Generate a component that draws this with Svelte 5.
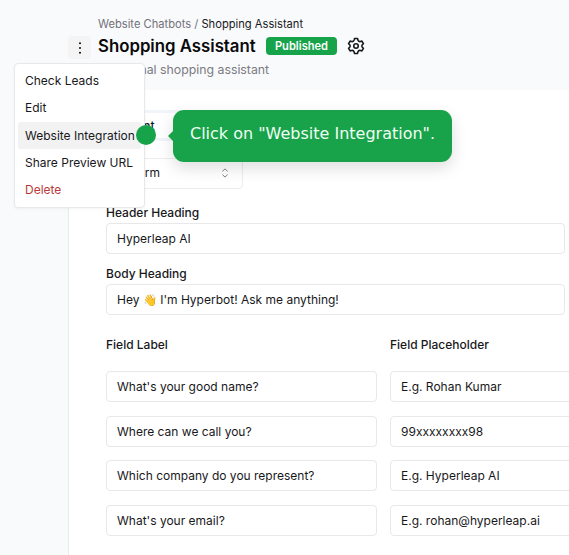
<script>
  const menu = ['Check Leads', 'Edit', 'Website Integration', 'Share Preview URL', 'Delete'];
  const rows = [
    ["What's your good name?", 'E.g. Rohan Kumar'],
    ['Where can we call you?', '99xxxxxxxx98'],
    ['Which company do you represent?', 'E.g. Hyperleap AI'],
    ["What's your email?", 'E.g. rohan@hyperleap.ai']
  ];
</script>

<div class="page">
  <header>
    <button class="more" aria-label="More options">
      <svg width="16" height="16" viewBox="0 0 16 16"><g fill="#18181b"><circle cx="8" cy="3.3" r="1.05"/><circle cx="8" cy="8" r="1.05"/><circle cx="8" cy="12.7" r="1.05"/></g></svg>
    </button>
    <div class="heading">
      <nav>Website Chatbots / <span>Shopping Assistant</span></nav>
      <div class="title">
        <h1>Shopping Assistant</h1>
        <span class="badge">Published</span>
        <svg class="gear" width="18" height="18" viewBox="0 0 24 24" fill="none" stroke="#18181b" stroke-width="2.1" stroke-linecap="round" stroke-linejoin="round"><path d="M9.6 3.9 10 2h4l.5 2.1a3 3 0 0 0 3.4 2l2-.6 2 3.4-1.5 1.5a2.3 2.3 0 0 0 0 3.2l1.5 1.5-2 3.4-2-.6a3 3 0 0 0-3.4 2L14 22h-4l-.5-2.1a3 3 0 0 0-3.4-2l-2 .6-2-3.4 1.5-1.5a2.3 2.3 0 0 0 0-3.2L2.1 8.9l2-3.4 2 .6a3 3 0 0 0 3.5-2.2z"/><circle cx="12" cy="12" r="3"/></svg>
      </div>
      <p>Personal shopping assistant</p>
    </div>
  </header>

  <main>
    <div class="tabs"><span>Content</span></div>
    <div class="select">
      <span>Form</span>
      <svg width="14" height="14" viewBox="0 0 14 14" fill="none" stroke="#808086" stroke-width="1" stroke-linecap="round" stroke-linejoin="round"><path d="M4.7 5.1 7 2.9l2.3 2.2M4.7 8.9 7 11.1l2.3-2.2"/></svg>
    </div>
    <div class="label">Header Heading</div>
    <div class="input wide">Hyperleap AI</div>
    <div class="label second">Body Heading</div>
    <div class="input wide">Hey <span class="wave">👋</span> I'm Hyperbot! Ask me anything!</div>
    <div class="grid">
      <div class="label">Field Label</div>
      <div class="label">Field Placeholder</div>
      {#each rows as [name, hint]}
        <div class="input">{name}</div>
        <div class="input">{hint}</div>
      {/each}
    </div>
  </main>

  <div class="menu">
    {#each menu as item, i}
      <div class="item" class:active={i === 2} class:danger={i === 4}>{item}</div>
    {/each}
  </div>
  <div class="dot"></div>
  <div class="tip">Click on "Website Integration".</div>
</div>

<style>
  .page {
    position: relative;
    width: 569px;
    height: 555px;
    overflow: hidden;
    background: #f9fafb;
    color: #18181b;
    font: 12px/18px Inter, sans-serif;
    box-sizing: border-box;
  }
  .page * { box-sizing: border-box; }
  header { display: flex; height: 90px; padding: 15px 0 0 68px; }
  .more {
    width: 23px; height: 23px; margin-top: 21px; padding: 0; border: 0;
    border-radius: 4px; background: #f4f4f5;
    display: grid; place-items: center;
  }
  .heading { margin-left: 7px; white-space: nowrap; }
  nav { font-size: 11.16px; line-height: 18px; color: #71717a; }
  nav span { color: #18181b; }
  .title { display: flex; align-items: center; height: 26px; }
  h1 { margin: 0; width: 158px; font-size: 16.8px; line-height: 26px; font-weight: 600; color: #09090b; }
  .badge {
    width: 71px; height: 18px; margin-left: 10px; border-radius: 4px; text-align: center;
    background: #16a34a; color: #fff; font-size: 11.1px; line-height: 18px; font-weight: 600;
  }
  .gear { margin-left: 10px; }
  p { margin: 2px 0 0; padding-left: 8px; color: #7b7b83; font-size: 12.3px; line-height: 18px; }
  main {
    height: 465px; margin-left: 68px; padding: 20px 0 0 37px;
    border-left: 1px solid #e8eaec; background: #fff;
  }
  .tabs { width: 120px; height: 31px; padding: 3px 3px; border-radius: 5px; background: #f1f5f9; }
  .tabs span { display: block; width: 96px; height: 25px; line-height: 25px; background: #fff; border-radius: 3px; font-weight: 500; }
  .select {
    display: flex; align-items: center; justify-content: space-between;
    width: 137px; height: 31px; margin-top: 17px; padding: 0 10px 1px 24px;
    border: 1px solid #ececee; border-radius: 4px;
  }
  .label { font-weight: 500; }
  .select + .label { margin-top: 15px; }
  .label.second { margin-top: 11px; }
  .input {
    height: 31px; padding: 0 10px; border: 1px solid #e8e8ea; border-radius: 4px;
    line-height: 29px; white-space: nowrap;
  }
  .wide { width: 459px; }
  .label + .input { margin-top: 1px; }
  .wave { font-size: 11.5px; }
  .grid {
    display: grid; grid-template-columns: 271px 271px; column-gap: 13px;
    grid-template-rows: 35.2px; grid-auto-rows: 44.5px; margin-top: 21.3px;
  }
  .grid .input { margin-top: 0; }
  .menu {
    position: absolute; left: 14px; top: 63px; width: 131px; height: 145px;
    padding: 3px 3px; border: 1px solid #e8e8eb; border-radius: 4px;
    background: #fff; box-shadow: 0 1px 3px #0000000d;
  }
  .item { height: 27.3px; padding-left: 7px; line-height: 27px; white-space: nowrap; border-radius: 2px; }
  .active { background: #f2f2f3; }
  .danger { color: #b93a3a; }
  .dot { position: absolute; left: 136px; top: 125px; width: 20px; height: 20px; border-radius: 50%; background: #16a34a; }
  .tip {
    position: absolute; left: 173px; top: 109.5px; width: 279px; height: 52.5px;
    padding-left: 17px; border-radius: 11px; background: #18a34a; color: #f0fff4;
    font: 16px/48px "DejaVu Sans", sans-serif; white-space: nowrap;
    box-shadow: 0 6px 16px #00000022;
  }
  .tip::before {
    content: ""; position: absolute; left: -5px; top: 21px;
    border: 5px solid transparent; border-right: 5px solid #18a34a; border-left: 0;
  }
</style>
